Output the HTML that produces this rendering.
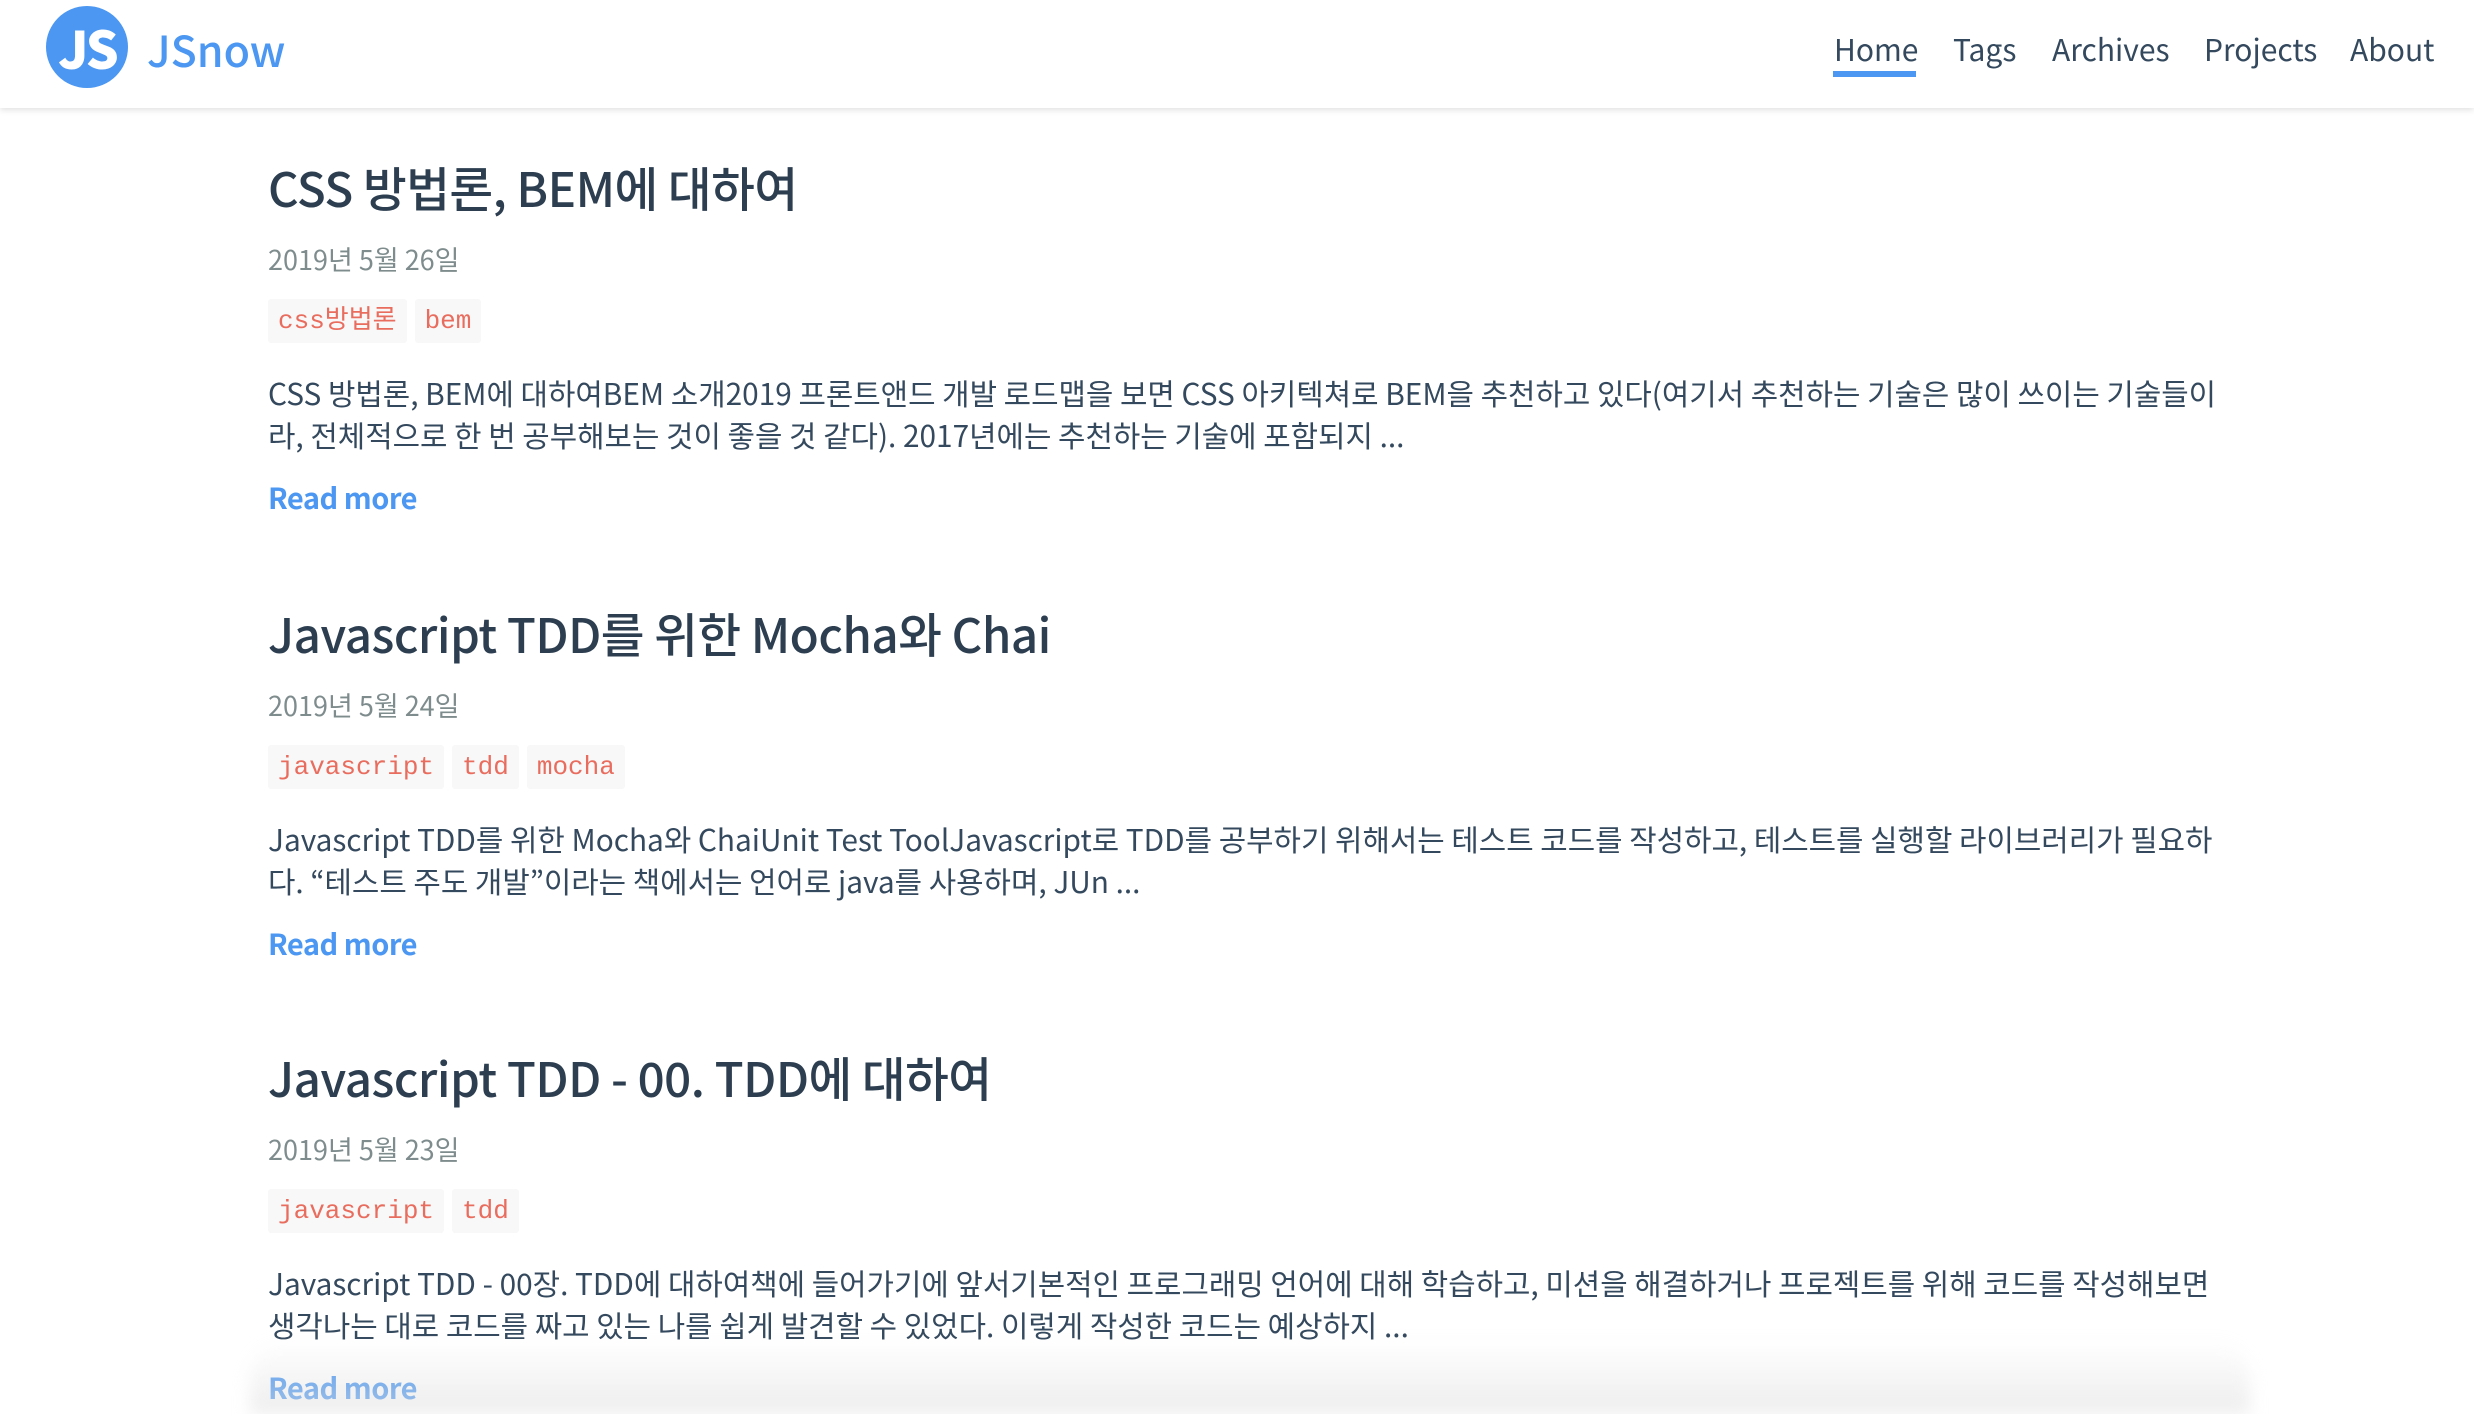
<!DOCTYPE html>
<html><head><meta charset="utf-8">
<style>
*{margin:0;padding:0;box-sizing:border-box}
html,body{width:2474px;height:1414px;overflow:hidden;background:#fff}
body{font-family:"Noto Sans CJK KR","Liberation Sans",sans-serif;color:#34495e;position:relative}
.hdr{position:absolute;left:0;top:0;width:2474px;height:108px;background:#fff;box-shadow:0 2px 6px rgba(0,0,0,.12);z-index:5}
.logo{position:absolute;left:46px;top:6px;width:82px;height:82px;border-radius:50%;background:#4b97f1;color:#fff;font-weight:900;font-size:52px;line-height:82px;text-align:center;letter-spacing:-3px}
.brand{position:absolute;left:147px;top:14px;font-size:43px;color:#4b97f1;font-weight:500;line-height:70px}
.nav{position:absolute;top:20px;font-size:30px;line-height:56px;color:#34495e}
.ul{position:absolute;left:1833px;top:71px;width:83px;height:6px;background:#4b97f1}
.post{position:absolute;left:268px;width:1952px}
.t{font-size:47.5px;font-weight:500;line-height:70px;color:#2c3e50;letter-spacing:-0.5px}
.d{font-size:27px;color:#7f8c8d;line-height:40px;margin-top:17px}
.tags{margin-top:20px;height:44px}
.tag{display:inline-block;background:#f8f8f8;color:#e96d5e;font-family:"Liberation Mono","Noto Sans CJK KR",monospace;font-size:26px;line-height:44px;padding:0 10px;margin-right:8px;border-radius:3px}
.e{font-size:29.8px;line-height:42px;margin-top:28px;color:#34495e}
.r{font-size:29px;font-weight:700;color:#4b97f1;margin-top:20px;line-height:44px;letter-spacing:-0.5px}
.fade{position:absolute;left:250px;width:2000px;top:1340px;height:74px;background:linear-gradient(rgba(240,240,240,0),rgba(225,225,225,.6));border-radius:40px 40px 0 0;filter:blur(8px)}
</style></head><body>
<div class="hdr">
<div class="logo">JS</div>
<div class="brand">JSnow</div>
<div class="nav" style="left:1834px">Home</div>
<div class="nav" style="left:1953px">Tags</div>
<div class="nav" style="left:2052px">Archives</div>
<div class="nav" style="left:2204px">Projects</div>
<div class="nav" style="left:2350px">About</div>
<div class="ul"></div>
</div>

<div class="post" style="top:152px">
<div class="t">CSS 방법론, BEM에 대하여</div>
<div class="d">2019년 5월 26일</div>
<div class="tags"><span class="tag">css방법론</span><span class="tag">bem</span></div>
<div class="e">CSS 방법론, BEM에 대하여BEM 소개2019 프론트앤드 개발 로드맵을 보면 CSS 아키텍쳐로 BEM을 추천하고 있다(여기서 추천하는 기술은 많이 쓰이는 기술들이<br>라, 전체적으로 한 번 공부해보는 것이 좋을 것 같다). 2017년에는 추천하는 기술에 포함되지 ...</div>
<div class="r">Read more</div>
</div>

<div class="post" style="top:598px">
<div class="t">Javascript TDD를 위한 Mocha와 Chai</div>
<div class="d">2019년 5월 24일</div>
<div class="tags"><span class="tag">javascript</span><span class="tag">tdd</span><span class="tag">mocha</span></div>
<div class="e">Javascript TDD를 위한 Mocha와 ChaiUnit Test ToolJavascript로 TDD를 공부하기 위해서는 테스트 코드를 작성하고, 테스트를 실행할 라이브러리가 필요하<br>다. “테스트 주도 개발”이라는 책에서는 언어로 java를 사용하며, JUn ...</div>
<div class="r">Read more</div>
</div>

<div class="post" style="top:1042px">
<div class="t">Javascript TDD - 00. TDD에 대하여</div>
<div class="d">2019년 5월 23일</div>
<div class="tags"><span class="tag">javascript</span><span class="tag">tdd</span></div>
<div class="e">Javascript TDD - 00장. TDD에 대하여책에 들어가기에 앞서기본적인 프로그래밍 언어에 대해 학습하고, 미션을 해결하거나 프로젝트를 위해 코드를 작성해보면<br>생각나는 대로 코드를 짜고 있는 나를 쉽게 발견할 수 있었다. 이렇게 작성한 코드는 예상하지 ...</div>
<div class="r">Read more</div>
</div>
<div class="fade"></div>
</body></html>
